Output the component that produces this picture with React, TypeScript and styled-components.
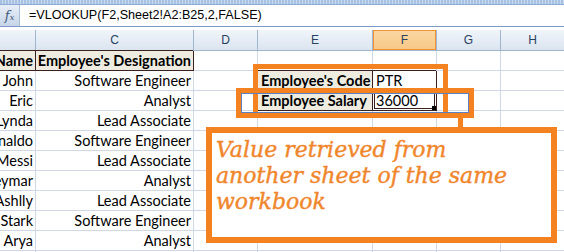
import styled, { createGlobalStyle } from "styled-components";

const GlobalStyle = createGlobalStyle`
  body {
    margin: 0;
    background: #fff;
    overflow: hidden;
  }
`;

const GRID = "#d0d7e5";
const INK = "#3b2020";
const ORANGE = "#f58220";

const Page = styled.div`
  position: relative;
  width: 564px;
  height: 252px;
  overflow: hidden;
  background: #fff;
  font-family: Lato, "Liberation Sans", sans-serif;
`;

const TopStrip = styled.div`
  height: 4px;
  background: repeating-linear-gradient(90deg, #a7c1e4 0 2px, #cddbee 2px 3px);
  border-bottom: 1px solid #8eabd6;
`;

const FormulaRow = styled.div`
  display: flex;
  height: 21px;
  border-bottom: 1px solid #7d9ac8;
`;

const FxButton = styled.div`
  width: 19px;
  display: flex;
  align-items: center;
  justify-content: center;
  background: linear-gradient(#e8eef7, #c6d5e9);
  border-right: 1px solid #a9bdd9;
  font-family: "DejaVu Serif", serif;
  font-style: italic;
  color: #44597a;
`;

const FxF = styled.span`
  font-size: 13px;
`;

const FxX = styled.span`
  font-size: 8px;
  margin-top: 4px;
`;

const FormulaText = styled.div`
  padding-left: 9px;
  line-height: 21px;
  font-family: "Liberation Sans", Arial, sans-serif;
  font-size: 12.6px;
  color: #000;
`;

const ColumnHeaderRow = styled.div`
  display: grid;
  grid-template-columns: 36px 158px 64px 115px 64px 64px 64px;
  margin-top: 3px;
  height: 21px;
`;

const ColHeader = styled.div<{ $active?: boolean }>`
  display: flex;
  align-items: center;
  justify-content: center;
  border-right: 1px solid #9eb6ce;
  border-bottom: 1px solid #9eb6ce;
  background: ${(p) =>
    p.$active
      ? "linear-gradient(#fbd7a3, #f8c887)"
      : "linear-gradient(#f1f5fa, #dbe4ef)"};
  box-shadow: ${(p) => (p.$active ? "inset 0 0 0 1px #f29436" : "none")};
  font-family: "Liberation Sans", Arial, sans-serif;
  font-size: 12px;
  color: #27415f;
`;

const SheetRow = styled.div`
  display: grid;
  grid-template-columns: 36px 158px 64px 115px 64px 64px 64px;
  height: 20px;
`;

const Cell = styled.div<{
  $align?: "left" | "right";
  $bold?: boolean;
  $fill?: boolean;
  $table?: boolean;
  $active?: boolean;
}>`
  position: relative;
  display: flex;
  align-items: center;
  justify-content: ${(p) => (p.$align === "left" ? "flex-start" : "flex-end")};
  padding: 0 ${(p) => (p.$align === "left" ? "0 0 3px" : "2px 0 0")};
  overflow: hidden;
  white-space: nowrap;
  border-right: 1px solid ${(p) => (p.$table ? INK : GRID)};
  border-bottom: 1px solid ${(p) => (p.$table ? INK : GRID)};
  background: ${(p) => (p.$fill ? "#eeece1" : "#fff")};
  box-shadow: ${(p) =>
    p.$active
      ? `-1px -1px 0 ${INK}, inset 0 0 0 1px #fff, inset 0 0 0 2px ${INK}`
      : p.$table
      ? `-1px -1px 0 ${INK}`
      : "none"};
  font-size: 14.5px;
  font-weight: ${(p) => (p.$bold ? 700 : 400)};
  color: #000;
`;

const FillHandle = styled.span`
  position: absolute;
  right: 0;
  bottom: 0;
  width: 4px;
  height: 4px;
  background: #000;
`;

const Frame = styled.div<{ $inner?: boolean }>`
  position: absolute;
  box-sizing: border-box;
  border: 5px solid ${ORANGE};
  box-shadow: ${(p) => (p.$inner ? "inset 0 0 0 1px #5b7fbf" : "none")};
`;

const Stub = styled.div`
  position: absolute;
  left: 458px;
  top: 118px;
  width: 5px;
  height: 10px;
  background: ${ORANGE};
`;

const Callout = styled.div`
  position: absolute;
  left: 206px;
  top: 127px;
  width: 351px;
  height: 116px;
  box-sizing: border-box;
  border: 6px solid ${ORANGE};
  background: #fff;
  padding: 4px 4px;
  white-space: nowrap;
  font-family: "DejaVu Serif", serif;
  font-style: italic;
  font-size: 22px;
  line-height: 26px;
  color: #f0862c;
  -webkit-text-stroke: 0.4px #f0862c;
`;

type Row = {
  name: string;
  role: string;
  label?: string;
  value?: string;
  active?: boolean;
};

const rows: Row[] = [
  { name: "John", role: "Software Engineer", label: "Employee's Code", value: "PTR" },
  { name: "Eric", role: "Analyst", label: "Employee Salary", value: "36000", active: true },
  { name: "Lynda", role: "Lead Associate" },
  { name: "Ronaldo", role: "Software Engineer" },
  { name: "Messi", role: "Lead Associate" },
  { name: "Neymar", role: "Analyst" },
  { name: "Ashlly", role: "Lead Associate" },
  { name: "Stark", role: "Software Engineer" },
  { name: "Arya", role: "Analyst" },
  { name: "", role: "" },
];

const columns = ["", "C", "D", "E", "F", "G", "H"];

export default function App() {
  return (
    <Page>
      <GlobalStyle />
      <TopStrip />
      <FormulaRow>
        <FxButton>
          <FxF>f</FxF>
          <FxX>x</FxX>
        </FxButton>
        <FormulaText>=VLOOKUP(F2,Sheet2!A2:B25,2,FALSE)</FormulaText>
      </FormulaRow>

      <ColumnHeaderRow>
        {columns.map((c, i) => (
          <ColHeader key={i} $active={c === "F"}>
            {c}
          </ColHeader>
        ))}
      </ColumnHeaderRow>

      <SheetRow>
        <Cell $bold $fill $table>Name</Cell>
        <Cell $bold $fill $table>Employee's Designation</Cell>
        <Cell />
        <Cell />
        <Cell />
        <Cell />
        <Cell />
      </SheetRow>

      {rows.map((r, i) => (
        <SheetRow key={i}>
          <Cell>{r.name}</Cell>
          <Cell>{r.role}</Cell>
          <Cell />
          {r.label ? (
            <Cell $align="left" $bold $fill $table>
              {r.label}
            </Cell>
          ) : (
            <Cell />
          )}
          {r.label ? (
            <Cell $align="left" $table $active={r.active}>
              {r.value}
              {r.active && <FillHandle />}
            </Cell>
          ) : (
            <Cell />
          )}
          <Cell />
          <Cell />
        </SheetRow>
      ))}

      <Frame style={{ left: 253, top: 64, width: 195, height: 54 }} />
      <Frame $inner style={{ left: 236, top: 88, width: 238, height: 30 }} />
      <Stub />
      <Callout>
        Value retrieved from
        <br />
        another sheet of the same
        <br />
        workbook
      </Callout>
    </Page>
  );
}
